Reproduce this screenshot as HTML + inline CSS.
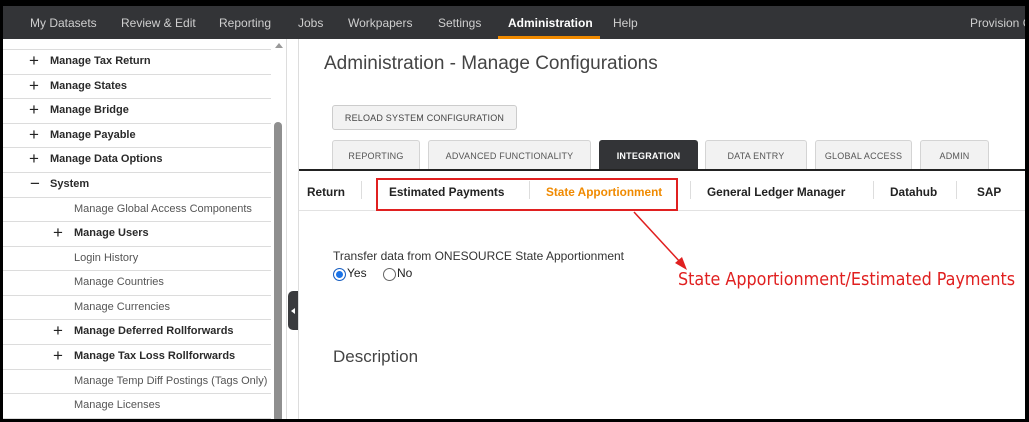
<!DOCTYPE html>
<html><head><meta charset="utf-8"><style>
*{margin:0;padding:0;box-sizing:border-box}
body{width:1029px;height:422px;background:#000;position:relative;overflow:hidden;font-family:"Liberation Sans",Arial,sans-serif}
#frame{position:absolute;left:3px;top:6px;width:1022px;height:413px;background:#fff;overflow:hidden}
#nav{position:absolute;left:0;top:0;width:1022px;height:33px;background:#333437;color:#cfcfcf;font-size:12px;overflow:hidden}
#nav span{position:absolute;top:10px;white-space:nowrap}
#side{position:absolute;left:0;top:33px;width:283px;height:380px;background:#fff;overflow:hidden}
.row{position:absolute;left:0;width:268px;height:24.6px;border-top:1px solid #dcdcdc;font-size:11px;color:#333;line-height:23px;white-space:nowrap}
.b{font-weight:bold;color:#2a2a2a}
.pl{position:absolute;font-size:17px;font-weight:normal;top:-1px;color:#222}
.sub{color:#555}
#sb{position:absolute;left:271px;top:83px;width:8px;height:300px;background:#8f8f8f;border-radius:4px}
#main{position:absolute;left:295px;top:33px;width:727px;height:380px;border-left:1px solid #ddd}
.tab{position:absolute;top:101px;height:30px;background:#f2f2f2;border:1px solid #d4d4d4;border-bottom:none;border-radius:3px 3px 0 0;font-size:9px;color:#555;text-align:center;line-height:30px;letter-spacing:.2px;white-space:nowrap}
.st{position:absolute;top:146px;font-size:11.8px;font-weight:bold;color:#222;white-space:nowrap}
.sep{position:absolute;top:142px;width:1px;height:18px;background:#ddd}
</style></head><body>
<div id="frame">
<div id="nav">
<span style="left:27px">My Datasets</span><span style="left:118px">Review &amp; Edit</span><span style="left:216px">Reporting</span><span style="left:295px">Jobs</span><span style="left:345px">Workpapers</span><span style="left:435px">Settings</span>
<span style="left:505px;color:#fff;font-weight:bold">Administration</span>
<div style="position:absolute;left:495px;top:30px;width:102px;height:3px;background:#f08a00"></div>
<span style="left:610px">Help</span><span style="left:967px">Provision C</span>
</div>
<div id="side">
<div class="row b" style="top:10px"><span class="pl" style="left:26px">+</span><span style="position:absolute;left:47px">Manage Tax Return</span></div>
<div class="row b" style="top:35px"><span class="pl" style="left:26px">+</span><span style="position:absolute;left:47px">Manage States</span></div>
<div class="row b" style="top:59px"><span class="pl" style="left:26px">+</span><span style="position:absolute;left:47px">Manage Bridge</span></div>
<div class="row b" style="top:84px"><span class="pl" style="left:26px">+</span><span style="position:absolute;left:47px">Manage Payable</span></div>
<div class="row b" style="top:108px"><span class="pl" style="left:26px">+</span><span style="position:absolute;left:47px">Manage Data Options</span></div>
<div class="row b" style="top:133px"><span class="pl" style="left:27px">−</span><span style="position:absolute;left:47px">System</span></div>
<div class="row sub" style="top:158px"><span style="position:absolute;left:71px">Manage Global Access Components</span></div>
<div class="row b" style="top:182px"><span class="pl" style="left:50px">+</span><span style="position:absolute;left:71px">Manage Users</span></div>
<div class="row sub" style="top:207px"><span style="position:absolute;left:71px">Login History</span></div>
<div class="row sub" style="top:231px"><span style="position:absolute;left:71px">Manage Countries</span></div>
<div class="row sub" style="top:256px"><span style="position:absolute;left:71px">Manage Currencies</span></div>
<div class="row b" style="top:280px"><span class="pl" style="left:50px">+</span><span style="position:absolute;left:71px">Manage Deferred Rollforwards</span></div>
<div class="row b" style="top:305px"><span class="pl" style="left:50px">+</span><span style="position:absolute;left:71px">Manage Tax Loss Rollforwards</span></div>
<div class="row sub" style="top:330px"><span style="position:absolute;left:71px">Manage Temp Diff Postings (Tags Only)</span></div>
<div class="row sub" style="top:354px"><span style="position:absolute;left:71px">Manage Licenses</span></div>
<div class="row" style="top:379px"></div>
<div style="position:absolute;left:272px;top:4px;width:0;height:0;border-left:4px solid transparent;border-right:4px solid transparent;border-bottom:5px solid #999"></div>
<div id="sb"></div>
</div>
<div style="position:absolute;left:283px;top:33px;width:1px;height:380px;background:#ddd"></div>
<div style="position:absolute;left:285px;top:285px;width:10px;height:39px;background:#3a3b3e;border-radius:5px 0 0 5px"></div>
<div style="position:absolute;left:288px;top:302px;width:0;height:0;border-top:3px solid transparent;border-bottom:3px solid transparent;border-right:4px solid #fff"></div>
<div id="main">
<div style="position:absolute;left:25px;top:14px;font-size:19px;color:#444">Administration - Manage Configurations</div>
<div style="position:absolute;left:33px;top:66px;width:185px;height:25px;background:#f2f2f2;border:1px solid #ccc;border-radius:3px;font-size:9px;color:#444;text-align:center;line-height:24px;letter-spacing:.2px;white-space:nowrap">RELOAD SYSTEM CONFIGURATION</div>
<div class="tab" style="left:33px;width:88px">REPORTING</div>
<div class="tab" style="left:129px;width:163px">ADVANCED FUNCTIONALITY</div>
<div class="tab" style="left:300px;width:99px;background:#333437;color:#fff;font-weight:bold;border-color:#333437">INTEGRATION</div>
<div class="tab" style="left:406px;width:102px">DATA ENTRY</div>
<div class="tab" style="left:516px;width:97px">GLOBAL ACCESS</div>
<div class="tab" style="left:621px;width:69px">ADMIN</div>
<div style="position:absolute;left:0;top:130px;width:727px;height:2px;background:#222"></div>
<div style="position:absolute;left:0;top:171px;width:727px;height:1px;background:#e2e2e2"></div>
<div class="st" style="left:8px">Return</div>
<div class="sep" style="left:62px"></div>
<div class="st" style="left:90px">Estimated Payments</div>
<div class="sep" style="left:230px"></div>
<div class="st" style="left:247px;color:#f08a00">State Apportionment</div>
<div class="sep" style="left:391px"></div>
<div class="st" style="left:408px">General Ledger Manager</div>
<div class="sep" style="left:574px"></div>
<div class="st" style="left:591px">Datahub</div>
<div class="sep" style="left:657px"></div>
<div class="st" style="left:678px">SAP</div>
<div style="position:absolute;left:77px;top:139px;width:302px;height:33px;border:2px solid #e02020"></div>
<div style="position:absolute;left:34px;top:210px;font-size:12px;color:#333">Transfer data from ONESOURCE State Apportionment</div>
<div style="position:absolute;left:34px;top:229px;width:13px;height:13px;border-radius:50%;background:#1a73e8;border:1px solid #1a5fc0;box-shadow:inset 0 0 0 2px #fff"></div>
<div style="position:absolute;left:48px;top:227px;font-size:12px;color:#222">Yes</div>
<div style="position:absolute;left:84px;top:229px;width:13px;height:13px;border-radius:50%;border:1px solid #666"></div>
<div style="position:absolute;left:98px;top:227px;font-size:12px;color:#222">No</div>
<svg style="position:absolute;left:0;top:0" width="727" height="380"><line x1="335" y1="173" x2="382" y2="224" stroke="#e02020" stroke-width="1.5"/><polygon points="388,231 376,224 383,218" fill="#e02020"/></svg>
<div style="position:absolute;left:379px;top:230px;font-size:17.8px;color:#e02020;font-family:'DejaVu Sans Condensed','Liberation Sans Narrow',sans-serif;white-space:nowrap">State Apportionment/Estimated Payments</div>
<div style="position:absolute;left:34px;top:308px;font-size:17px;color:#444">Description</div>
</div>
</div>
</body></html>
